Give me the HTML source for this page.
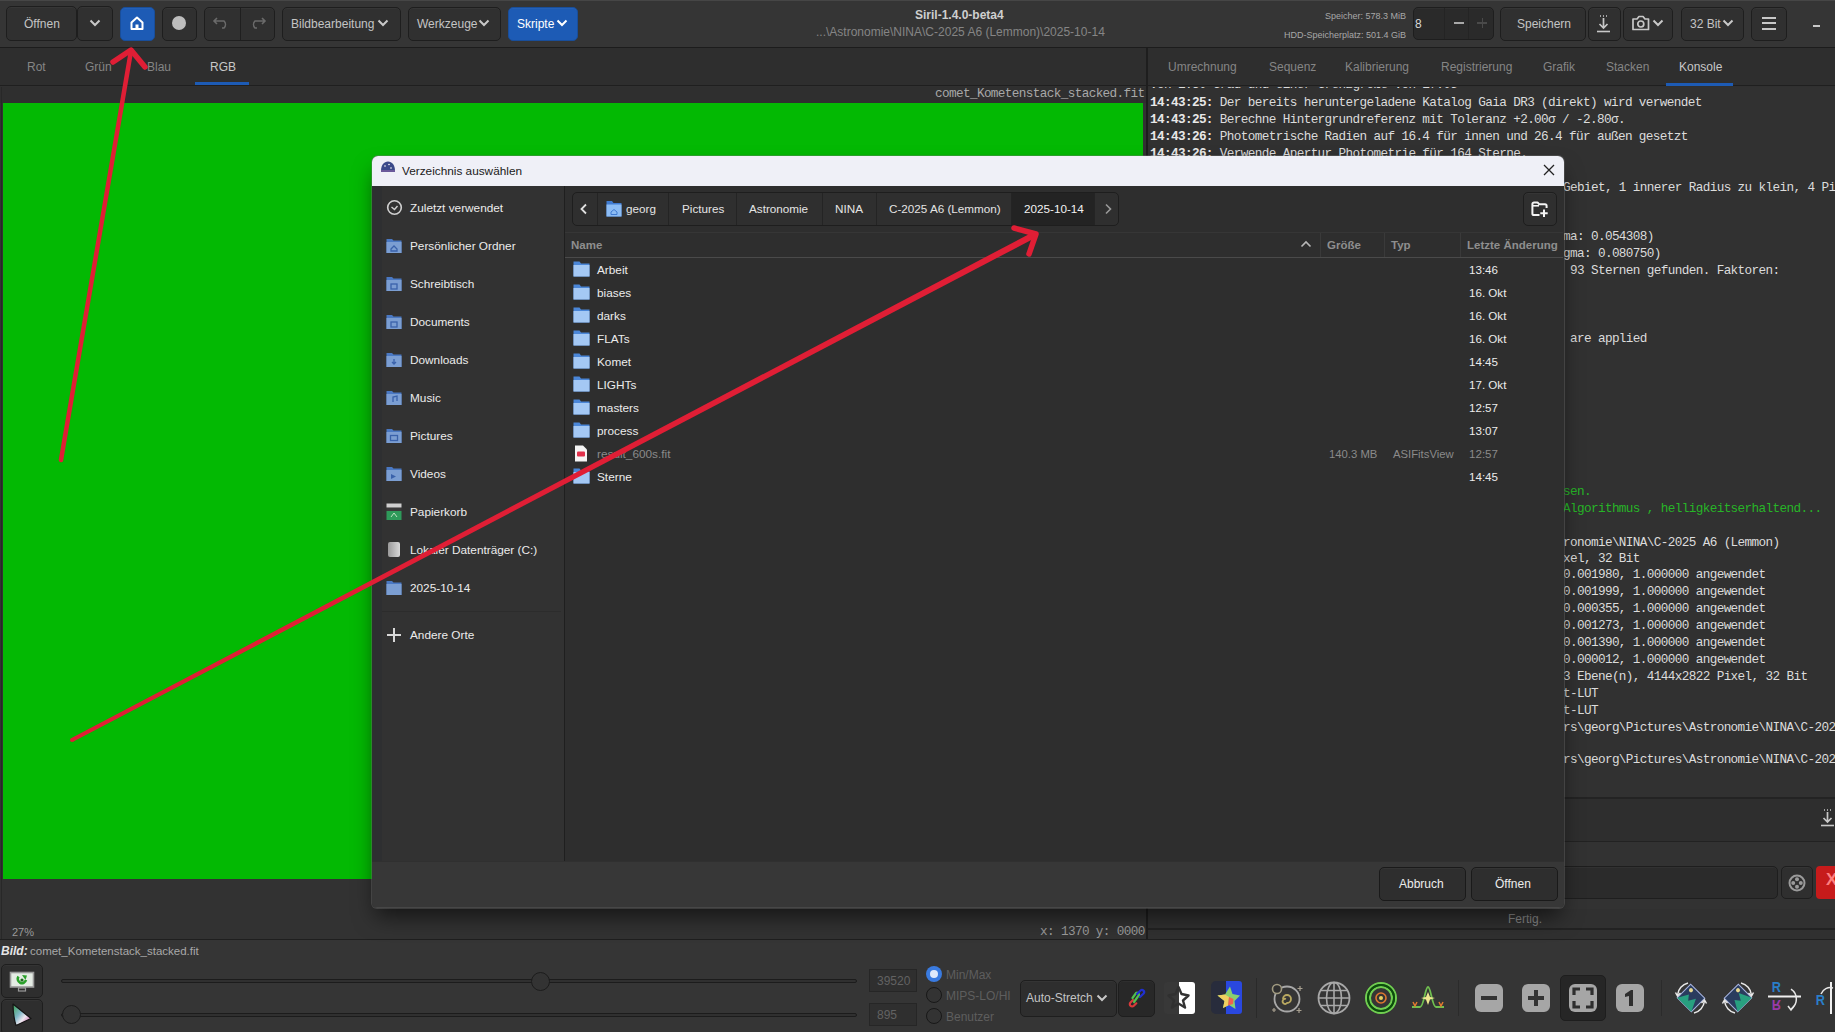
<!DOCTYPE html>
<html><head><meta charset="utf-8">
<style>
*{box-sizing:border-box;margin:0;padding:0}
html,body{width:1835px;height:1032px;overflow:hidden;background:#303030;font-family:"Liberation Sans",sans-serif;color:#cfcfcf}
.a{position:absolute}
.btn{position:absolute;border:1px solid #1e1e1e;border-radius:5px;background:#303030;box-shadow:inset 0 1px 0 rgba(255,255,255,0.03)}
.t{position:absolute;white-space:pre;font-size:12px;line-height:14px}
.mono{font-family:"Liberation Mono",monospace}
svg{position:absolute;overflow:visible}
.con{position:absolute;left:1150px;font-family:"Liberation Mono",monospace;font-size:12.7px;letter-spacing:-0.63px;line-height:17px;white-space:pre;color:#dcdcdc}
.con b{color:#e8e8e8}
.con.g{color:#27b527}
.side{position:absolute;left:410px;font-size:11.8px;line-height:14px;white-space:pre;color:#ececec}
.row{position:absolute;left:597px;font-size:11.8px;line-height:14px;white-space:pre;color:#ececec}
.dt{position:absolute;left:1469px;font-size:11.6px;line-height:14px;white-space:pre;color:#ececec}
.tab{position:absolute;top:60px;font-size:12px;line-height:14px;white-space:pre;color:#858585}
</style></head><body>
<!-- ===== header ===== -->
<div class="a" style="left:0;top:0;width:1835px;height:48px;background:#353535;border-bottom:1px solid #1c1c1c"></div>
<div class="a" style="left:0;top:0;width:1835px;height:1px;background:#464646"></div>
<div class="btn" style="left:6px;top:6px;width:71px;height:35px"></div>
<div class="t" style="left:24px;top:17px;color:#c4c4c4">Öffnen</div>
<div class="btn" style="left:77px;top:6px;width:36px;height:35px"></div>
<svg style="left:89px;top:19px" width="12" height="8"><path d="M1.5 1.5 L6 6 L10.5 1.5" fill="none" stroke="#c8c8c8" stroke-width="2"/></svg>
<div class="btn" style="left:120px;top:7px;width:35px;height:34px;background:#1d5bb5;border-color:#194e9a"></div>
<svg style="left:128px;top:14px" width="18" height="18" viewBox="0 0 18 18"><path d="M3.5 8.5 L9 3.5 L14.5 8.5 V15 H3.5 Z" fill="none" stroke="#fff" stroke-width="2" stroke-linejoin="round"/><rect x="7.5" y="10.5" width="3" height="4.5" fill="#fff"/></svg>
<div class="btn" style="left:162px;top:7px;width:35px;height:34px"></div>
<div class="a" style="left:172px;top:16px;width:14px;height:14px;border-radius:50%;background:#bdbdbd"></div>
<div class="btn" style="left:204px;top:7px;width:71px;height:34px"></div>
<div class="a" style="left:240px;top:8px;width:1px;height:32px;background:#1f1f1f"></div>
<svg style="left:212px;top:15px" width="20" height="16" viewBox="0 0 20 16"><path d="M5 3 L2 6 L5 9 M2 6 H12 A5 5 0 0 1 12 13 H10" fill="none" stroke="#6a6a6a" stroke-width="1.6"/></svg>
<svg style="left:247px;top:15px" width="20" height="16" viewBox="0 0 20 16"><path d="M15 3 L18 6 L15 9 M18 6 H8 A5 5 0 0 0 8 13 H10" fill="none" stroke="#6a6a6a" stroke-width="1.6"/></svg>
<div class="btn" style="left:282px;top:7px;width:119px;height:34px"></div>
<div class="t" style="left:291px;top:17px;color:#c4c4c4">Bildbearbeitung</div>
<svg style="left:377px;top:19px" width="12" height="8"><path d="M1.5 1.5 L6 6 L10.5 1.5" fill="none" stroke="#c8c8c8" stroke-width="2"/></svg>
<div class="btn" style="left:408px;top:7px;width:93px;height:34px"></div>
<div class="t" style="left:417px;top:17px;color:#c4c4c4">Werkzeuge</div>
<svg style="left:478px;top:19px" width="12" height="8"><path d="M1.5 1.5 L6 6 L10.5 1.5" fill="none" stroke="#c8c8c8" stroke-width="2"/></svg>
<div class="btn" style="left:508px;top:7px;width:70px;height:34px;background:#1d5bb5;border-color:#194e9a"></div>
<div class="t" style="left:517px;top:17px;color:#fff">Skripte</div>
<svg style="left:556px;top:19px" width="12" height="8"><path d="M1.5 1.5 L6 6 L10.5 1.5" fill="none" stroke="#fff" stroke-width="2"/></svg>

<div class="t" style="left:915px;top:8px;font-weight:bold;color:#cfcfcf">Siril-1.4.0-beta4</div>
<div class="t" style="left:816px;top:25px;color:#858585">...\Astronomie\NINA\C-2025 A6 (Lemmon)\2025-10-14</div>

<div class="t" style="left:1300px;top:11px;width:106px;text-align:right;font-size:9px;line-height:10px;color:#a8a8a8">Speicher: 578.3 MiB</div>
<div class="t" style="left:1250px;top:30px;width:156px;text-align:right;font-size:9px;line-height:10px;color:#a8a8a8">HDD-Speicherplatz: 501.4 GiB</div>
<div class="btn" style="left:1413px;top:7px;width:81px;height:33px;background:#2a2a2a"></div>
<div class="a" style="left:1444px;top:8px;width:1px;height:31px;background:#242424"></div>
<div class="a" style="left:1468px;top:8px;width:1px;height:31px;background:#242424"></div>
<div class="t" style="left:1415px;top:17px;color:#d8d8d8">8</div>
<div class="a" style="left:1454px;top:22px;width:10px;height:2px;background:#a8a8a8"></div>
<div class="a" style="left:1477px;top:22px;width:10px;height:1.5px;background:#4a4a4a"></div>
<div class="a" style="left:1481.5px;top:18px;width:1.5px;height:10px;background:#4a4a4a"></div>
<div class="btn" style="left:1500px;top:7px;width:86px;height:34px"></div>
<div class="t" style="left:1517px;top:17px;color:#c4c4c4">Speichern</div>
<div class="btn" style="left:1588px;top:7px;width:33px;height:34px"></div>
<svg style="left:1594px;top:14px" width="20" height="20" viewBox="0 0 20 20"><path d="M6 2h1M9 2h1M12 2h1" stroke="#c8c8c8" stroke-width="1.5"/><path d="M9.5 4 V14 M5.5 10 L9.5 14 L13.5 10" fill="none" stroke="#c8c8c8" stroke-width="1.7"/><path d="M3 17.5 H16" stroke="#c8c8c8" stroke-width="1.6"/></svg>
<div class="btn" style="left:1623px;top:7px;width:50px;height:34px"></div>
<svg style="left:1631px;top:14px" width="20" height="18" viewBox="0 0 20 18"><path d="M2 5 H6 L8 2.5 H12 L14 5 H17.5 V15.5 H2 Z" fill="none" stroke="#c8c8c8" stroke-width="1.7" stroke-linejoin="round"/><circle cx="9.8" cy="10" r="3" fill="none" stroke="#c8c8c8" stroke-width="1.7"/></svg>
<svg style="left:1652px;top:19px" width="12" height="8"><path d="M1.5 1.5 L6 6 L10.5 1.5" fill="none" stroke="#c8c8c8" stroke-width="2"/></svg>
<div class="btn" style="left:1681px;top:7px;width:63px;height:34px"></div>
<div class="t" style="left:1690px;top:17px;color:#c4c4c4">32 Bit</div>
<svg style="left:1722px;top:19px" width="12" height="8"><path d="M1.5 1.5 L6 6 L10.5 1.5" fill="none" stroke="#c8c8c8" stroke-width="2"/></svg>
<div class="btn" style="left:1751px;top:7px;width:36px;height:34px"></div>
<div class="a" style="left:1762px;top:17px;width:14px;height:2px;background:#c8c8c8"></div>
<div class="a" style="left:1762px;top:22px;width:14px;height:2px;background:#c8c8c8"></div>
<div class="a" style="left:1762px;top:28px;width:14px;height:2px;background:#c8c8c8"></div>
<div class="a" style="left:1813px;top:25px;width:7px;height:1.5px;background:#c8c8c8"></div>
<!-- ===== tabs ===== -->
<div class="a" style="left:0;top:48px;width:1146px;height:38px;background:#2e2e2e;border-bottom:1px solid #1f1f1f"></div>
<div class="a" style="left:1148px;top:48px;width:687px;height:38px;background:#2e2e2e;border-bottom:1px solid #1f1f1f"></div>
<div class="a" style="left:1146px;top:48px;width:2px;height:892px;background:#1e1e1e"></div>
<div class="tab" style="left:27px">Rot</div>
<div class="tab" style="left:85px">Grün</div>
<div class="tab" style="left:147px">Blau</div>
<div class="tab" style="left:210px;color:#c8c8c8">RGB</div>
<div class="a" style="left:195px;top:82px;width:54px;height:3px;background:#1d5bb5"></div>
<div class="tab" style="left:1168px">Umrechnung</div>
<div class="tab" style="left:1269px">Sequenz</div>
<div class="tab" style="left:1345px">Kalibrierung</div>
<div class="tab" style="left:1441px">Registrierung</div>
<div class="tab" style="left:1543px">Grafik</div>
<div class="tab" style="left:1606px">Stacken</div>
<div class="tab" style="left:1679px;color:#c8c8c8">Konsole</div>
<div class="a" style="left:1666px;top:83px;width:67px;height:3px;background:#1d5bb5"></div>

<!-- image area -->
<div class="a" style="left:0;top:87px;width:1146px;height:852px;background:#323232"></div>
<div class="a" style="left:0;top:87px;width:1146px;height:16px;background:#2f2f2f"></div>
<div class="a" style="left:1px;top:87px;width:1px;height:852px;background:#282828"></div>
<div class="t mono" style="left:935px;top:87px;font-size:12.7px;letter-spacing:-0.63px;line-height:14px;color:#a8a8a8">comet_Kometenstack_stacked.fit</div>
<div class="a" style="left:3px;top:103px;width:1140px;height:776px;background:#03b903"></div>
<div class="t" style="left:12px;top:925px;color:#9a9a9a;font-size:11px">27%</div>
<div class="t mono" style="left:1040px;top:925px;font-size:12.7px;letter-spacing:-0.63px;color:#9a9a9a">x: 1370 y: 0000</div>

<!-- console panel -->
<div class="a" style="left:1148px;top:87px;width:687px;height:710px;background:#313131;overflow:hidden">
<div class="con" style="left:2px;top:-11px">von 1.30 Grad und einer Grenzgröße von 17.05</div>
</div>
<div class="con" style="top:94px"><b>14:43:25:</b> Der bereits heruntergeladene Katalog Gaia DR3 (direkt) wird verwendet</div>
<div class="con" style="top:111px"><b>14:43:25:</b> Berechne Hintergrundreferenz mit Toleranz +2.00σ / -2.80σ.</div>
<div class="con" style="top:128px"><b>14:43:26:</b> Photometrische Radien auf 16.4 für innen und 26.4 für außen gesetzt</div>
<div class="con" style="top:145px"><b>14:43:26:</b> Verwende Apertur Photometrie für 164 Sterne.</div>
<div class="con" style="top:179px;left:1563px">Gebiet, 1 innerer Radius zu klein, 4 Pi</div>
<div class="con" style="top:228px;left:1563px">ma: 0.054308)</div>
<div class="con" style="top:245px;left:1563px">gma: 0.080750)</div>
<div class="con" style="top:262px;left:1563px"> 93 Sternen gefunden. Faktoren:</div>
<div class="con" style="top:330px;left:1563px"> are applied</div>
<div class="con g" style="top:483px;left:1563px">sen.</div>
<div class="con g" style="top:500px;left:1563px">Algorithmus , helligkeitserhaltend...</div>
<div class="con" style="top:534px;left:1563px">ronomie\NINA\C-2025 A6 (Lemmon)</div>
<div class="con" style="top:550px;left:1563px">xel, 32 Bit</div>
<div class="con" style="top:566px;left:1563px">0.001980, 1.000000 angewendet</div>
<div class="con" style="top:583px;left:1563px">0.001999, 1.000000 angewendet</div>
<div class="con" style="top:600px;left:1563px">0.000355, 1.000000 angewendet</div>
<div class="con" style="top:617px;left:1563px">0.001273, 1.000000 angewendet</div>
<div class="con" style="top:634px;left:1563px">0.001390, 1.000000 angewendet</div>
<div class="con" style="top:651px;left:1563px">0.000012, 1.000000 angewendet</div>
<div class="con" style="top:668px;left:1563px">3 Ebene(n), 4144x2822 Pixel, 32 Bit</div>
<div class="con" style="top:685px;left:1563px">t-LUT</div>
<div class="con" style="top:702px;left:1563px">t-LUT</div>
<div class="con" style="top:719px;left:1563px">rs\georg\Pictures\Astronomie\NINA\C-202</div>
<div class="con" style="top:751px;left:1563px">rs\georg\Pictures\Astronomie\NINA\C-202</div>
<div class="a" style="left:1148px;top:797px;width:687px;height:2px;background:#232323"></div>
<div class="a" style="left:1148px;top:799px;width:687px;height:42px;background:#2e2e2e"></div>
<svg style="left:1818px;top:808px" width="20" height="20" viewBox="0 0 20 20"><path d="M6 2h1M9 2h1M12 2h1" stroke="#c8c8c8" stroke-width="1.5"/><path d="M9.5 4 V14 M5.5 10 L9.5 14 L13.5 10" fill="none" stroke="#c8c8c8" stroke-width="1.7"/><path d="M3 17.5 H16" stroke="#c8c8c8" stroke-width="1.6"/></svg>
<div class="a" style="left:1148px;top:841px;width:687px;height:1px;background:#222"></div>
<div class="a" style="left:1148px;top:842px;width:687px;height:67px;background:#323232"></div>
<div class="btn" style="left:1560px;top:866px;width:218px;height:33px;background:#2b2b2b"></div>
<div class="btn" style="left:1781px;top:866px;width:32px;height:33px;background:#2f2f2f"></div>
<svg style="left:1787px;top:873px" width="20" height="20" viewBox="0 0 20 20"><circle cx="10" cy="10" r="7.5" fill="none" stroke="#9a9a9a" stroke-width="2"/><circle cx="10" cy="6.2" r="2" fill="#9a9a9a"/><circle cx="10" cy="13.8" r="2" fill="#9a9a9a"/><circle cx="6.2" cy="10" r="2" fill="#9a9a9a"/><circle cx="13.8" cy="10" r="2" fill="#9a9a9a"/></svg>
<div class="a" style="left:1816px;top:866px;width:25px;height:33px;background:#c71b1b;border-radius:4px"></div>
<div class="t" style="left:1826px;top:873px;font-size:17px;color:#ff8080;font-weight:bold">X</div>
<div class="t" style="left:1508px;top:912px;color:#8a8a8a">Fertig.</div>
<div class="a" style="left:1148px;top:928px;width:687px;height:2px;background:#222"></div>
<!-- ===== bottom ===== -->
<div class="a" style="left:0;top:939px;width:1835px;height:1px;background:#1f1f1f"></div>
<div class="a" style="left:0;top:940px;width:1835px;height:92px;background:#353535"></div>
<div class="t" style="left:1px;top:944px;font-weight:bold;font-style:italic;color:#e6e6e6">Bild:</div>
<div class="t" style="left:30px;top:944px;color:#a8a8a8;font-size:11.5px">comet_Kometenstack_stacked.fit</div>
<div class="btn" style="left:1px;top:964px;width:42px;height:34px;background:#2e2e2e"></div>
<svg style="left:9px;top:971px" width="26" height="22" viewBox="0 0 26 22"><rect x="1.5" y="1.5" width="23" height="14.5" fill="#e4ece4" stroke="#9a9a9a" stroke-width="1.6"/><path d="M9.5 5.5 A4.2 4.2 0 1 0 17 9" fill="none" stroke="#2aa02a" stroke-width="2.6"/><path d="M13 4 L18 4.5 L16.5 9 Z" fill="#2aa02a"/><circle cx="13" cy="9" r="1.6" fill="#1a6a1a"/><rect x="9.5" y="17" width="7" height="3" fill="none" stroke="#9a9a9a" stroke-width="1.2"/></svg>
<div class="btn" style="left:1px;top:999px;width:42px;height:36px;background:#2e2e2e"></div>
<svg style="left:10px;top:1001px" width="26" height="28" viewBox="0 0 26 28"><defs><linearGradient id="tri" x1="0" y1="0" x2="0.9" y2="0.9"><stop offset="0" stop-color="#3aa050"/><stop offset="0.45" stop-color="#80b8c8"/><stop offset="0.7" stop-color="#f0e8f0"/><stop offset="1" stop-color="#c060a8"/></linearGradient></defs><path d="M3 3 L21 17.5 L6 24.5 C4 18 3 10 3 3 Z" fill="url(#tri)" stroke="#141414" stroke-width="1.2" stroke-linejoin="round"/></svg>
<div class="a" style="left:61px;top:978.5px;width:796px;height:4.5px;border:1px solid #1c1c1c;background:#303030;border-radius:2px"></div>
<div class="a" style="left:61px;top:1012.5px;width:796px;height:4.5px;border:1px solid #1c1c1c;background:#303030;border-radius:2px"></div>
<div class="a" style="left:530.5px;top:971.5px;width:19px;height:19px;border-radius:50%;background:#333;border:1.5px solid #1c1c1c"></div>
<div class="a" style="left:62px;top:1005px;width:19px;height:19px;border-radius:50%;background:#333;border:1.5px solid #1c1c1c"></div>
<div class="a" style="left:869px;top:969px;width:48px;height:23px;border:1px solid #262626;background:#2f2f2f"></div>
<div class="t" style="left:877px;top:974px;color:#626262">39520</div>
<div class="a" style="left:869px;top:1003px;width:48px;height:23px;border:1px solid #262626;background:#2f2f2f"></div>
<div class="t" style="left:877px;top:1008px;color:#626262">895</div>
<div class="a" style="left:926px;top:966px;width:16px;height:16px;border-radius:50%;background:#3a7be0"></div>
<div class="a" style="left:930px;top:970px;width:8px;height:8px;border-radius:50%;background:#dfe9fb"></div>
<div class="a" style="left:926px;top:987px;width:16px;height:16px;border-radius:50%;border:1.5px solid #181818;background:#333"></div>
<div class="a" style="left:926px;top:1008px;width:16px;height:16px;border-radius:50%;border:1.5px solid #181818;background:#333"></div>
<div class="t" style="left:946px;top:968px;color:#5e5e5e">Min/Max</div>
<div class="t" style="left:946px;top:989px;color:#5e5e5e">MIPS-LO/HI</div>
<div class="t" style="left:946px;top:1010px;color:#5e5e5e">Benutzer</div>
<div class="btn" style="left:1020px;top:980px;width:97px;height:37px;background:#2e2e2e"></div>
<div class="t" style="left:1026px;top:991px;color:#c4c4c4">Auto-Stretch</div>
<svg style="left:1096px;top:994px" width="12" height="8"><path d="M1.5 1.5 L6 6 L10.5 1.5" fill="none" stroke="#c8c8c8" stroke-width="2"/></svg>
<div class="btn" style="left:1118px;top:980px;width:37px;height:37px;background:#282828"></div>
<svg style="left:1124px;top:986px" width="24" height="24" viewBox="0 0 24 24"><g fill="none" stroke-width="2.2" stroke-linecap="round"><path d="M9 14 L6.5 16.5 A2.3 2.3 0 0 0 9.8 19.8 L12.3 17.3" stroke="#d83a3a"/><path d="M10 16 L15 9 A2 2 0 0 0 12 7 L8.5 12" stroke="#50c050"/><path d="M13 8 L16.5 4.5 A2.2 2.2 0 0 1 19.6 7.6 L16 11" stroke="#2030d0"/></g></svg>
<div class="a" style="left:1164px;top:982px;width:15px;height:32px;background:#383838;border-radius:3px 0 0 3px"></div>
<div class="a" style="left:1179px;top:982px;width:16px;height:32px;background:#fff;border-radius:0 3px 3px 0"></div>
<svg style="left:1164px;top:982px" width="32" height="32" viewBox="0 0 32 32"><defs><clipPath id="cr"><rect x="15" y="0" width="17" height="32"/></clipPath><clipPath id="cl"><rect x="0" y="0" width="15" height="32"/></clipPath></defs><path d="M14.5 5 L17.5 12 L24.5 13.5 L19 18.5 L21 25.5 L14.5 21.5 L8 25.5 L10 18.5 L4.5 13.5 L11.5 12 Z" fill="none" stroke="#333" stroke-width="2.4" stroke-linejoin="round" clip-path="url(#cr)"/><path d="M14.5 5 L17.5 12 L24.5 13.5 L19 18.5 L21 25.5 L14.5 21.5 L8 25.5 L10 18.5 L4.5 13.5 L11.5 12 Z" fill="none" stroke="#303030" stroke-width="2.4" stroke-linejoin="round" clip-path="url(#cl)"/></svg>
<div class="a" style="left:1211px;top:981px;width:15px;height:33px;background:#282c3c;border-radius:5px 0 0 5px"></div>
<div class="a" style="left:1226px;top:981px;width:16px;height:33px;background:#2a48e0;border-radius:0 3px 3px 0"></div>
<svg style="left:1215px;top:985px" width="26" height="26" viewBox="0 0 26 26"><path d="M15 1.5 L17.5 9 L25 10.5 L19.5 16 L20.5 24 L14 20 L8 23 L9.5 16 L2.5 10.5 L10 9.5 Z" fill="#88d070"/><path d="M10 9.5 L14 12 L13 20.5 L8 23 L9.5 16 L2.5 10.5 Z" fill="#f0d060"/><path d="M14 12 L18.5 14 L18 19 L13 20.5Z" fill="#f06050"/></svg>
<div class="a" style="left:1256px;top:978px;width:1px;height:40px;background:#2a2a2a"></div>
<!-- bottom right icons -->
<svg style="left:1270px;top:982px" width="34" height="32" viewBox="0 0 34 32"><circle cx="17" cy="17" r="12.5" fill="none" stroke="#a8a8a8" stroke-width="1.8"/><circle cx="7" cy="7" r="4.5" fill="#2f2f2f" stroke="#a09a80" stroke-width="1.6"/><path d="M17 17 m-4 0 a4 4 0 1 1 4 4 a2.5 2.5 0 1 1 -1 -4" fill="none" stroke="#b8a860" stroke-width="1.8"/><path d="M30 4 v5 M27.5 6.5 h5 M4 26 v4 M2 28 h4 M29 26 v5 M26.5 28.5 h5" stroke="#a8a090" stroke-width="1.2"/></svg>
<svg style="left:1317px;top:981px" width="34" height="34" viewBox="0 0 34 34"><circle cx="17" cy="17" r="15.5" fill="none" stroke="#a8a8a8" stroke-width="1.8"/><ellipse cx="17" cy="17" rx="7.5" ry="15.5" fill="none" stroke="#a8a8a8" stroke-width="1.6"/><path d="M17 1.5 V32.5 M1.5 17 H32.5 M4 9.5 H30 M4 24.5 H30" stroke="#a8a8a8" stroke-width="1.6"/></svg>
<svg style="left:1364px;top:981px" width="34" height="34" viewBox="0 0 34 34"><circle cx="17" cy="17" r="15" fill="none" stroke="#70d050" stroke-width="2"/><circle cx="17" cy="17" r="11" fill="none" stroke="#70d050" stroke-width="2"/><circle cx="17" cy="17" r="13" fill="none" stroke="#0a500a" stroke-width="2"/><circle cx="17" cy="17" r="5" fill="none" stroke="#e07830" stroke-width="1.6"/><circle cx="17" cy="17" r="2" fill="#e8d060"/></svg>
<svg style="left:1410px;top:983px" width="36" height="30" viewBox="0 0 36 30"><path d="M2 24 H10 C14 24 15 4 18 4 C21 4 22 24 26 24 H34" fill="none" stroke="#70c050" stroke-width="1.8"/><path d="M18 9 L20 14 L25 15 L20 16.5 L18 22 L16 16.5 L11 15 L16 14 Z" fill="#f0e890"/><path d="M3 19 l2 4 l2 -4 M29 19 l2 4 l2 -4" fill="none" stroke="#e07830" stroke-width="1.5"/></svg>
<div class="a" style="left:1458px;top:980px;width:1px;height:36px;background:#2b2b2b"></div>
<div class="a" style="left:1475px;top:984px;width:28px;height:28px;border-radius:6px;background:#a6a6a6"></div>
<div class="a" style="left:1481px;top:996px;width:16px;height:4px;background:#333"></div>
<div class="a" style="left:1522px;top:984px;width:28px;height:28px;border-radius:6px;background:#a6a6a6"></div>
<div class="a" style="left:1528px;top:996px;width:16px;height:4px;background:#333"></div>
<div class="a" style="left:1534px;top:990px;width:4px;height:16px;background:#333"></div>
<div class="a" style="left:1560px;top:975px;width:46px;height:46px;border-radius:5px;background:#262626;border:1px solid #1e1e1e"></div>
<div class="a" style="left:1569px;top:984px;width:28px;height:28px;border-radius:6px;background:#a6a6a6"></div>
<svg style="left:1572px;top:987px" width="22" height="22" viewBox="0 0 22 22"><path d="M2 8 V2 H8 M14 2 H20 V8 M20 14 V20 H14 M8 20 H2 V14" fill="none" stroke="#2e2e2e" stroke-width="3.2"/></svg>
<div class="a" style="left:1616px;top:984px;width:28px;height:28px;border-radius:6px;background:#a6a6a6"></div>
<svg style="left:1616px;top:984px" width="28" height="28" viewBox="0 0 28 28"><path d="M9 10 L15 6 H17 V22 H13 V12 L9 13 Z" fill="#2e2e2e"/></svg>
<div class="a" style="left:1661px;top:980px;width:1px;height:36px;background:#2b2b2b"></div>
<svg style="left:1671px;top:978px" width="40" height="40" viewBox="0 0 40 40"><g transform="rotate(45 20 20)"><rect x="10" y="10.5" width="20" height="19" fill="#2a3c5e" stroke="#a8b4e0" stroke-width="1"/><path d="M10 29.5 L16 19 L20 24 L24 17 L30 29.5 Z" fill="#28a080"/><circle cx="14.5" cy="14.5" r="2" fill="#e8d890"/></g><path d="M6.5 17 A14 14 0 0 1 17 5" fill="none" stroke="#e8e8e8" stroke-width="1.5"/><path d="M4.5 14.5 L6.5 18 L9.5 15" fill="none" stroke="#e8e8e8" stroke-width="1.5"/><path d="M33.5 23 A14 14 0 0 1 23 35" fill="none" stroke="#e8e8e8" stroke-width="1.5"/><path d="M30.5 25 L33.5 22 L35.5 25.5" fill="none" stroke="#e8e8e8" stroke-width="1.5"/></svg>
<svg style="left:1718px;top:978px" width="40" height="40" viewBox="0 0 40 40"><g transform="rotate(-45 20 20)"><rect x="10" y="10.5" width="20" height="19" fill="#2a3c5e" stroke="#a8b4e0" stroke-width="1"/><path d="M10 29.5 L16 19 L20 24 L24 17 L30 29.5 Z" fill="#28a080"/><circle cx="25.5" cy="14.5" r="2" fill="#e8d890"/></g><path d="M23 5 A14 14 0 0 1 33.5 17" fill="none" stroke="#e8e8e8" stroke-width="1.5"/><path d="M30.5 15 L33.5 18 L35.5 14.5" fill="none" stroke="#e8e8e8" stroke-width="1.5"/><path d="M17 35 A14 14 0 0 1 6.5 23" fill="none" stroke="#e8e8e8" stroke-width="1.5"/><path d="M4.5 25.5 L6.5 22 L9.5 25" fill="none" stroke="#e8e8e8" stroke-width="1.5"/></svg>
<div class="t" style="left:1771px;top:980px;font-size:15px;font-weight:bold;color:#2a7ec8;transform:scaleX(0.85)">R</div>
<div class="t" style="left:1771px;top:998px;font-size:15px;font-weight:bold;color:#9a3aa8;transform:scale(0.85,-1)">R</div>
<svg style="left:1767px;top:982px" width="36" height="34" viewBox="0 0 36 34"><path d="M1 14.5 H34" stroke="#f0f0f0" stroke-width="2"/><path d="M24 7 A12 12 0 0 1 24 27" fill="none" stroke="#e8e8e8" stroke-width="1.5"/><path d="M21 24 L24 28 L27 24" fill="none" stroke="#e8e8e8" stroke-width="1.5"/></svg>
<div class="t" style="left:1815px;top:993px;font-size:15px;font-weight:bold;color:#2a7ec8;transform:scaleX(0.85)">R</div>
<div class="a" style="left:1830px;top:982px;width:2px;height:32px;background:#f0f0f0"></div>
<svg style="left:1819px;top:984px" width="16" height="14" viewBox="0 0 16 14"><path d="M2 10 A10 10 0 0 1 14 4" fill="none" stroke="#e8e8e8" stroke-width="1.5"/></svg>
<!-- ===== dialog ===== -->
<div class="a" style="left:372px;top:156px;width:1192px;height:752px;border-radius:6px 6px 5px 5px;box-shadow:0 0 0 1px rgba(120,120,120,0.35),0 12px 22px -4px rgba(0,0,0,0.6);background:#2d2d2d;overflow:hidden">
 <div class="a" style="left:0;top:0;width:1192px;height:30px;background:#eff0f7"></div>
 <div class="a" style="left:0;top:30px;width:192px;height:675px;background:#323232"></div>
 <div class="a" style="left:0;top:30px;width:10px;height:675px;background:#2e2f31"></div>
 <div class="a" style="left:192px;top:30px;width:1px;height:675px;background:#1f1f1f"></div>
 <div class="a" style="left:193px;top:30px;width:999px;height:675px;background:#2e2e2e"></div>
 <div class="a" style="left:0;top:705px;width:1192px;height:46px;background:#373737;border-top:1px solid #303030"></div>
 <div class="a" style="left:0;top:751px;width:1192px;height:1px;background:#474747"></div>
</div>
<svg style="left:380px;top:160px" width="16" height="14" viewBox="0 0 16 14"><path d="M1 11 C1 5 4 1.5 8 1.5 C12 1.5 15 5 15 11 Z" fill="#3a4a8a"/><path d="M1 10 H15 V12 H1Z" fill="#6a5a9a"/><circle cx="5" cy="6" r="0.8" fill="#fff"/><circle cx="9" cy="4.5" r="0.8" fill="#fff"/><circle cx="11" cy="8" r="0.8" fill="#fff"/></svg>
<div class="t" style="left:402px;top:164px;color:#1a1a1a;font-size:11.8px">Verzeichnis auswählen</div>
<svg style="left:1543px;top:164px" width="12" height="12" viewBox="0 0 12 12"><path d="M1 1 L11 11 M11 1 L1 11" stroke="#222" stroke-width="1.3"/></svg>

<!-- sidebar -->
<svg style="left:386px;top:199px" width="17" height="17" viewBox="0 0 17 17"><circle cx="8.5" cy="8.5" r="6.8" fill="none" stroke="#d0d0d0" stroke-width="1.6"/><path d="M5.5 8 L8.5 10.5 L11.5 7" fill="none" stroke="#d0d0d0" stroke-width="1.4"/></svg>
<div class="side" style="top:201px">Zuletzt verwendet</div>
<div class="side" style="top:239px">Persönlicher Ordner</div>
<div class="side" style="top:277px">Schreibtisch</div>
<div class="side" style="top:315px">Documents</div>
<div class="side" style="top:353px">Downloads</div>
<div class="side" style="top:391px">Music</div>
<div class="side" style="top:429px">Pictures</div>
<div class="side" style="top:467px">Videos</div>
<div class="side" style="top:505px">Papierkorb</div>
<div class="side" style="top:543px">Lokaler Datenträger (C:)</div>
<div class="side" style="top:581px">2025-10-14</div>
<div class="a" style="left:382px;top:611px;width:179px;height:1px;background:#2c2c2c"></div>
<div class="a" style="left:387px;top:634px;width:14px;height:1.6px;background:#d8d8d8"></div>
<div class="a" style="left:393.2px;top:627.5px;width:1.6px;height:14px;background:#d8d8d8"></div>
<div class="side" style="top:628px">Andere Orte</div>
<svg style="left:386px;top:237px" width="16" height="17" viewBox="0 0 16 17"><path d="M0.5 2 H6 L7.5 3.5 H15.5 V16 H0.5 Z" fill="#4a78c2"/><path d="M0.5 5 H15.5 V16 H0.5 Z" fill="#7b9ed2"/><path d="M5 12 L8 9 L11 12 V14 H5Z" fill="none" stroke="#3a62aa" stroke-width="1.3"/></svg>
<svg style="left:386px;top:275px" width="16" height="17" viewBox="0 0 16 17"><path d="M0.5 2 H6 L7.5 3.5 H15.5 V16 H0.5 Z" fill="#4a78c2"/><path d="M0.5 5 H15.5 V16 H0.5 Z" fill="#7b9ed2"/><rect x="5" y="9" width="6" height="5" fill="none" stroke="#3a62aa" stroke-width="1.3"/></svg>
<svg style="left:386px;top:313px" width="16" height="17" viewBox="0 0 16 17"><path d="M0.5 2 H6 L7.5 3.5 H15.5 V16 H0.5 Z" fill="#4a78c2"/><path d="M0.5 5 H15.5 V16 H0.5 Z" fill="#7b9ed2"/><rect x="5" y="9" width="6" height="5" fill="none" stroke="#3a62aa" stroke-width="1.3"/></svg>
<svg style="left:386px;top:351px" width="16" height="17" viewBox="0 0 16 17"><path d="M0.5 2 H6 L7.5 3.5 H15.5 V16 H0.5 Z" fill="#4a78c2"/><path d="M0.5 5 H15.5 V16 H0.5 Z" fill="#7b9ed2"/><path d="M8 8 V13 M6 11 L8 13 L10 11" fill="none" stroke="#3a62aa" stroke-width="1.3"/></svg>
<svg style="left:386px;top:389px" width="16" height="17" viewBox="0 0 16 17"><path d="M0.5 2 H6 L7.5 3.5 H15.5 V16 H0.5 Z" fill="#4a78c2"/><path d="M0.5 5 H15.5 V16 H0.5 Z" fill="#7b9ed2"/><path d="M7 13 V8 L11 7 V12" fill="none" stroke="#3a62aa" stroke-width="1.3"/></svg>
<svg style="left:386px;top:427px" width="16" height="17" viewBox="0 0 16 17"><path d="M0.5 2 H6 L7.5 3.5 H15.5 V16 H0.5 Z" fill="#4a78c2"/><path d="M0.5 5 H15.5 V16 H0.5 Z" fill="#7b9ed2"/><rect x="4.5" y="8.5" width="7" height="5" fill="none" stroke="#3a62aa" stroke-width="1.3"/></svg>
<svg style="left:386px;top:465px" width="16" height="17" viewBox="0 0 16 17"><path d="M0.5 2 H6 L7.5 3.5 H15.5 V16 H0.5 Z" fill="#4a78c2"/><path d="M0.5 5 H15.5 V16 H0.5 Z" fill="#7b9ed2"/><path d="M5 9 V14 L10 11.5Z" fill="#3a62aa"/></svg>
<svg style="left:386px;top:579px" width="16" height="17" viewBox="0 0 16 17"><path d="M0.5 2 H6 L7.5 3.5 H15.5 V16 H0.5 Z" fill="#4a78c2"/><path d="M0.5 5 H15.5 V16 H0.5 Z" fill="#7b9ed2"/></svg>
<svg style="left:386px;top:503px" width="16" height="17" viewBox="0 0 16 17"><rect x="0.5" y="0.5" width="15" height="4" fill="#d0d0d0"/><rect x="0.5" y="5" width="15" height="3" fill="#3a3a3a"/><rect x="0.5" y="8" width="15" height="9" fill="#2e9a5a"/><path d="M5 14 L8 10 L11 14" fill="none" stroke="#bfe0c0" stroke-width="1"/></svg>
<div class="a" style="left:388px;top:542px;width:12px;height:15px;border-radius:2px;background:linear-gradient(90deg,#9a9a9a,#d8d8d8)"></div>
<!-- breadcrumb -->
<div class="a" style="left:572px;top:192px;width:547px;height:34px;border:1px solid #1e1e1e;border-radius:5px;background:#2f2f2f"></div>
<div class="a" style="left:597px;top:193px;width:1px;height:32px;background:#242424"></div>
<div class="a" style="left:668px;top:193px;width:1px;height:32px;background:#242424"></div>
<div class="a" style="left:736px;top:193px;width:1px;height:32px;background:#242424"></div>
<div class="a" style="left:822px;top:193px;width:1px;height:32px;background:#242424"></div>
<div class="a" style="left:876px;top:193px;width:1px;height:32px;background:#242424"></div>
<div class="a" style="left:1011px;top:193px;width:1px;height:32px;background:#242424"></div>
<div class="a" style="left:1012px;top:193px;width:82px;height:32px;background:#232323"></div>
<div class="a" style="left:1094px;top:193px;width:1px;height:32px;background:#242424"></div>
<svg style="left:579px;top:203px" width="10" height="12" viewBox="0 0 10 12"><path d="M7 1.5 L2.5 6 L7 10.5" fill="none" stroke="#e0e0e0" stroke-width="1.8"/></svg>
<svg style="left:1103px;top:203px" width="10" height="12" viewBox="0 0 10 12"><path d="M3 1.5 L7.5 6 L3 10.5" fill="none" stroke="#9a9a9a" stroke-width="1.6"/></svg>
<svg style="left:606px;top:200px" width="16" height="17" viewBox="0 0 16 17"><path d="M0.5 1 H6 L7.5 3 H15.5 V16.5 H0.5 Z" fill="#3f7ad0"/><path d="M0.5 4.5 H15.5 V16.5 H0.5 Z" fill="#8cbcf4"/><path d="M5 12 L8 9.5 L11 12 V14.5 H5Z" fill="none" stroke="#3f7ad0" stroke-width="1"/></svg>
<div class="t" style="left:626px;top:202px;color:#e4e4e4;font-size:11.7px">georg</div>
<div class="t" style="left:682px;top:202px;color:#e4e4e4;font-size:11.7px">Pictures</div>
<div class="t" style="left:749px;top:202px;color:#e4e4e4;font-size:11.7px">Astronomie</div>
<div class="t" style="left:835px;top:202px;color:#e4e4e4;font-size:11.7px">NINA</div>
<div class="t" style="left:889px;top:202px;color:#e4e4e4;font-size:11.7px">C-2025 A6 (Lemmon)</div>
<div class="t" style="left:1024px;top:202px;color:#f2f2f2;font-size:11.7px">2025-10-14</div>
<div class="btn" style="left:1523px;top:192px;width:34px;height:34px;background:#2f2f2f"></div>
<svg style="left:1530px;top:199px" width="20" height="20" viewBox="0 0 20 20"><path d="M9.5 16 H4 a1.6 1.6 0 0 1 -1.6 -1.6 V5 a1.6 1.6 0 0 1 1.6 -1.6 H7.5 L9.2 5.2 H15 a1.6 1.6 0 0 1 1.6 1.6 V9" fill="none" stroke="#f4f4f4" stroke-width="2" stroke-linejoin="round"/><path d="M3 6.8 H9" stroke="#f4f4f4" stroke-width="1.6"/><path d="M14 10.5 V18 M10.3 14.2 H17.7" stroke="#f4f4f4" stroke-width="2"/></svg>

<!-- column header -->
<div class="a" style="left:565px;top:232px;width:998px;height:1px;background:#363636"></div>
<div class="t" style="left:571px;top:238px;font-weight:bold;color:#8e8e8e;font-size:11.5px">Name</div>
<svg style="left:1300px;top:240px" width="12" height="8" viewBox="0 0 12 8"><path d="M1.5 6.5 L6 2 L10.5 6.5" fill="none" stroke="#b8b8b8" stroke-width="1.6"/></svg>
<div class="a" style="left:1320px;top:233px;width:1px;height:25px;background:#3a3a3a"></div>
<div class="a" style="left:1384px;top:233px;width:1px;height:25px;background:#3a3a3a"></div>
<div class="a" style="left:1460px;top:233px;width:1px;height:25px;background:#3a3a3a"></div>
<div class="t" style="left:1327px;top:238px;font-weight:bold;color:#8e8e8e;font-size:11.5px">Größe</div>
<div class="t" style="left:1391px;top:238px;font-weight:bold;color:#8e8e8e;font-size:11.5px">Typ</div>
<div class="t" style="left:1467px;top:238px;font-weight:bold;color:#8e8e8e;font-size:11.5px">Letzte Änderung</div>
<div class="a" style="left:565px;top:257px;width:998px;height:1px;background:#4a4a4a"></div>
<svg style="left:573px;top:261px" width="17" height="16" viewBox="0 0 17 16"><path d="M0.5 0.5 H6.5 L8 2.5 H16.5 V15.5 H0.5 Z" fill="#4a86d8"/><path d="M0.5 4 H16.5 V15.5 H0.5 Z" fill="#a4c8f4"/></svg>
<div class="row" style="top:263px">Arbeit</div>
<div class="dt" style="top:263px">13:46</div>
<svg style="left:573px;top:284px" width="17" height="16" viewBox="0 0 17 16"><path d="M0.5 0.5 H6.5 L8 2.5 H16.5 V15.5 H0.5 Z" fill="#4a86d8"/><path d="M0.5 4 H16.5 V15.5 H0.5 Z" fill="#a4c8f4"/></svg>
<div class="row" style="top:286px">biases</div>
<div class="dt" style="top:286px">16. Okt</div>
<svg style="left:573px;top:307px" width="17" height="16" viewBox="0 0 17 16"><path d="M0.5 0.5 H6.5 L8 2.5 H16.5 V15.5 H0.5 Z" fill="#4a86d8"/><path d="M0.5 4 H16.5 V15.5 H0.5 Z" fill="#a4c8f4"/></svg>
<div class="row" style="top:309px">darks</div>
<div class="dt" style="top:309px">16. Okt</div>
<svg style="left:573px;top:330px" width="17" height="16" viewBox="0 0 17 16"><path d="M0.5 0.5 H6.5 L8 2.5 H16.5 V15.5 H0.5 Z" fill="#4a86d8"/><path d="M0.5 4 H16.5 V15.5 H0.5 Z" fill="#a4c8f4"/></svg>
<div class="row" style="top:332px">FLATs</div>
<div class="dt" style="top:332px">16. Okt</div>
<svg style="left:573px;top:353px" width="17" height="16" viewBox="0 0 17 16"><path d="M0.5 0.5 H6.5 L8 2.5 H16.5 V15.5 H0.5 Z" fill="#4a86d8"/><path d="M0.5 4 H16.5 V15.5 H0.5 Z" fill="#a4c8f4"/></svg>
<div class="row" style="top:355px">Komet</div>
<div class="dt" style="top:355px">14:45</div>
<svg style="left:573px;top:376px" width="17" height="16" viewBox="0 0 17 16"><path d="M0.5 0.5 H6.5 L8 2.5 H16.5 V15.5 H0.5 Z" fill="#4a86d8"/><path d="M0.5 4 H16.5 V15.5 H0.5 Z" fill="#a4c8f4"/></svg>
<div class="row" style="top:378px">LIGHTs</div>
<div class="dt" style="top:378px">17. Okt</div>
<svg style="left:573px;top:399px" width="17" height="16" viewBox="0 0 17 16"><path d="M0.5 0.5 H6.5 L8 2.5 H16.5 V15.5 H0.5 Z" fill="#4a86d8"/><path d="M0.5 4 H16.5 V15.5 H0.5 Z" fill="#a4c8f4"/></svg>
<div class="row" style="top:401px">masters</div>
<div class="dt" style="top:401px">12:57</div>
<svg style="left:573px;top:422px" width="17" height="16" viewBox="0 0 17 16"><path d="M0.5 0.5 H6.5 L8 2.5 H16.5 V15.5 H0.5 Z" fill="#4a86d8"/><path d="M0.5 4 H16.5 V15.5 H0.5 Z" fill="#a4c8f4"/></svg>
<div class="row" style="top:424px">process</div>
<div class="dt" style="top:424px">13:07</div>
<svg style="left:574px;top:445px" width="14" height="17" viewBox="0 0 14 17"><path d="M1 0.5 H9 L13 4.5 V16.5 H1 Z" fill="#f4f4f4"/><rect x="3" y="6.5" width="8" height="5" rx="1" fill="#e0304a"/></svg>
<div class="row" style="top:447px;color:#8a8a8a">result_600s.fit</div>
<div class="dt" style="top:447px;color:#8a8a8a">12:57</div>
<div class="t" style="left:1329px;top:447px;color:#8a8a8a;font-size:11.3px">140.3 MB</div>
<div class="t" style="left:1393px;top:447px;color:#8a8a8a;font-size:11.3px">ASIFitsView</div>
<svg style="left:573px;top:468px" width="17" height="16" viewBox="0 0 17 16"><path d="M0.5 0.5 H6.5 L8 2.5 H16.5 V15.5 H0.5 Z" fill="#4a86d8"/><path d="M0.5 4 H16.5 V15.5 H0.5 Z" fill="#a4c8f4"/></svg>
<div class="row" style="top:470px">Sterne</div>
<div class="dt" style="top:470px">14:45</div>
<!-- dialog buttons -->
<div class="btn" style="left:1379px;top:867px;width:87px;height:34px;background:#2e2e2e;border-color:#1a1a1a"></div>
<div class="t" style="left:1399px;top:877px;color:#ececec">Abbruch</div>
<div class="btn" style="left:1471px;top:867px;width:87px;height:34px;background:#2e2e2e;border-color:#1a1a1a"></div>
<div class="t" style="left:1495px;top:877px;color:#ececec">Öffnen</div>

<!-- red arrows -->
<svg style="left:0;top:0" width="1835" height="1032" viewBox="0 0 1835 1032">
 <g stroke="#e01e35" stroke-linecap="round" stroke-linejoin="round" fill="none">
  <path d="M61 460 L131 51" stroke-width="4.5"/>
  <path d="M113 62 L131 50 L145 67" stroke-width="5.5"/>
  <polygon points="72.93,741.77 1037.44,236.74 1034.56,231.26 71.07,738.23" fill="#e01e35" stroke="none"/>
  <circle cx="72" cy="740" r="2" fill="#e01e35" stroke="none"/>
  <path d="M1014 228 L1036 234 L1029 254" stroke-width="5.5"/>
 </g>
</svg>
</body></html>
